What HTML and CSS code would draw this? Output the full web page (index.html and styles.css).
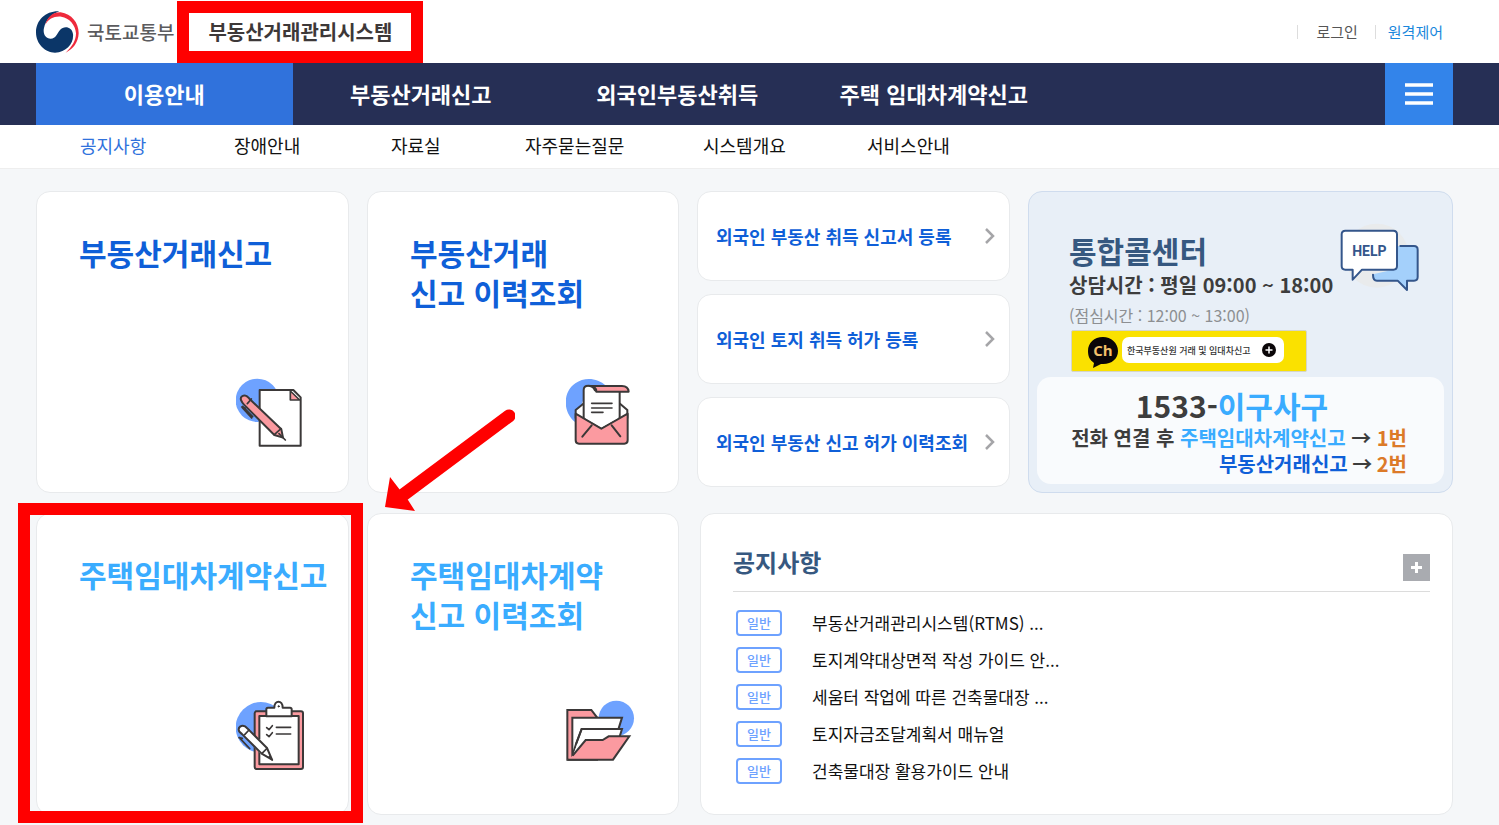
FILE: index.html
```html
<!DOCTYPE html>
<html lang="ko">
<head>
<meta charset="utf-8">
<meta name="viewport" content="width=device-width, initial-scale=1">
<title>부동산거래관리시스템</title>
<link rel="stylesheet" href="styles.css">
</head>
<body>
<header class="header">
  <div class="brand">
    <a class="ministry" href="#">
      <svg class="emblem" viewBox="108 31 129 126" aria-hidden="true">
        <path fill="#0b3668" d="M178 32C138 30 108 58 108 95c0 35 27 61 57 61 35-2 57-28 54-56-3-22-27-26-39-12-10 12-12 26-28 26s-24-16-20-32c6-26 23-42 46-50z"/>
        <path fill="#ee2a3c" d="M136 72c6-24 24-38 46-37 33 5 54 31 54 63-1 27-16 47-39 58 20-18 31-38 31-58-2-26-20-46-44-50-22-2-38 6-48 24z"/>
      </svg>
      <span>국토교통부</span>
    </a>
    <a class="system" href="#">부동산거래관리시스템</a>
  </div>
  <div class="account">
    <a class="login" href="#">로그인</a>
    <a class="remote" href="#">원격제어</a>
  </div>
</header>

<nav class="mainnav" aria-label="주 메뉴">
  <ul class="mainnav-list">
    <li class="current"><a href="#">이용안내</a></li>
    <li><a href="#">부동산거래신고</a></li>
    <li><a href="#">외국인부동산취득</a></li>
    <li><a href="#">주택 임대차계약신고</a></li>
  </ul>
  <button class="menu" type="button" aria-label="전체 메뉴">
    <svg viewBox="0 0 28 22" aria-hidden="true"><path stroke="#fff" stroke-width="3.4" d="M0 2h28M0 11h28M0 20h28"/></svg>
  </button>
</nav>

<nav class="subnav" aria-label="하위 메뉴">
  <a class="current" href="#">공지사항</a>
  <a href="#">장애안내</a>
  <a href="#">자료실</a>
  <a href="#">자주묻는질문</a>
  <a href="#">시스템개요</a>
  <a href="#">서비스안내</a>
</nav>

<main class="board">
  <a class="card tile" href="#">
    <span class="tile-title">부동산거래신고</span>
    <svg class="tile-icon" viewBox="45 39 210 216" aria-hidden="true">
      <circle cx="109" cy="106" r="65" fill="#6ea2ff"/>
      <g stroke="#3b3838" stroke-width="6" stroke-linejoin="round">
        <path fill="#fff" d="M116 75h101l22 22v145H116z"/>
        <path fill="#fb9aa0" d="M208 78v27h28z" stroke-width="5"/>
        <path fill="#fb9aa0" d="M61 107c-5-9 3-18 13-15 5 1 8 6 12 10l95 91 5 25-26-8-91-91c-4-4-6-7-8-12z"/>
        <path fill="none" stroke-linecap="round" d="M79 116l12-14M160 209l20-18M174 206l19 19M62 126l11 3M64 128l28 31M65 124l30 31" stroke-width="5"/>
      </g>
    </svg>
  </a>

  <a class="card tile" href="#">
    <span class="tile-title">부동산거래<br>신고 이력조회</span>
    <svg class="tile-icon" viewBox="48 39 210 216" aria-hidden="true">
      <path fill="#6ea2ff" d="M76 172C38 142 37 82 76 55c27-20 66-17 92 7l-60 20z"/>
      <g stroke="#3b3838" stroke-width="6" stroke-linejoin="round" stroke-linecap="round">
        <path fill="#fff" d="M100 116l-23 19v24l76 40 79-40v-24l-22-19z"/>
        <path fill="#fff" d="M101 164V75c0-17 27-17 33 0l6 3h69v92l-54 23z"/>
        <path fill="#fb9aa0" d="M118 63h98c13 0 19 6 20 17h-97c0-12-8-17-21-17z"/>
        <path fill="#fb9aa0" d="M77 146l77 45 79-45v80c0 7-3 10-10 10H87c-7 0-10-3-10-10z"/>
        <path fill="none" d="M125 181l-28 34M185 181l26 33"/>
        <path fill="#fff" stroke="none" d="M106 158l49 28 49-28V85h-98z"/>
        <path fill="none" d="M125 115h61M125 129h61M125 142h34" stroke-width="5"/>
      </g>
    </svg>
  </a>

  <div class="links">
    <a class="card link" href="#"><span>외국인 부동산 취득 신고서 등록</span><svg viewBox="0 0 10 16" aria-hidden="true"><path d="M1 1l7 7-7 7"/></svg></a>
    <a class="card link" href="#"><span>외국인 토지 취득 허가 등록</span><svg viewBox="0 0 10 16" aria-hidden="true"><path d="M1 1l7 7-7 7"/></svg></a>
    <a class="card link" href="#"><span>외국인 부동산 신고 허가 이력조회</span><svg viewBox="0 0 10 16" aria-hidden="true"><path d="M1 1l7 7-7 7"/></svg></a>
  </div>

  <section class="card call">
    <div class="call-head">
      <div class="call-text">
        <h2>통합콜센터</h2>
        <p class="hours">상담시간 : 평일 09:00 ~ 18:00</p>
        <p class="lunch">(점심시간 : 12:00 ~ 13:00)</p>
      </div>
      <svg class="help" viewBox="27 10 246 216" role="img" aria-label="HELP">
        <circle cx="140" cy="111" r="96" fill="#e9ebec"/>
        <g stroke="#34568b" stroke-width="6" stroke-linejoin="round" stroke-linecap="round">
          <path fill="#a4d0fb" stroke="none" d="M202 82h50c7 0 11 4 11 11v82c0 7-4 11-11 11h-21v28l-28-28h-62c-8 0-12-6-12-19l73-17z"/>
          <path fill="none" d="M211 82h41c7 0 11 4 11 11v82c0 7-4 11-11 11h-21v28l-28-28h-62c-8 0-12-6-12-18"/>
          <path fill="#fff" d="M46 36h144c7 0 11 4 11 11v95c0 7-4 11-11 11H96l-28 30v-30H46c-7 0-11-4-11-11V47c0-7 4-11 11-11z"/>
        </g>
        <text class="help-word" x="118" y="112" text-anchor="middle">HELP</text>
      </svg>
    </div>
    <a class="channel" href="#">
      <svg class="bubble" viewBox="0 0 30 31" aria-hidden="true">
        <path fill="#0a0608" d="M15 0C6 0 0 6 0 14c0 6 2 9 6 12l-1 5 8-4c10 1 17-5 17-13S23 0 15 0z"/>
        <text class="bubble-word" x="15" y="19" text-anchor="middle">Ch</text>
      </svg>
      <span class="pill">한국부동산원 거래 및 임대차신고
        <svg viewBox="0 0 14 14" aria-hidden="true"><circle cx="7" cy="7" r="7" fill="#0a0608"/><path stroke="#fff" stroke-width="1.5" d="M3.500 7h7M7 3.500v7"/></svg>
      </span>
    </a>
    <div class="phone">
      <p class="number">1533-<span class="sky">이구사구</span></p>
      <p class="route">전화 연결 후 <span class="sky">주택임대차계약신고</span> → <span class="key">1번</span></p>
      <p class="route"><span class="blue">부동산거래신고</span> → <span class="key">2번</span></p>
    </div>
  </section>

  <a class="card tile rent marked" href="#">
    <span class="tile-title">주택임대차계약신고</span>
    <svg class="tile-icon" viewBox="45 30 210 216" aria-hidden="true">
      <circle cx="120" cy="112" r="76" fill="#6ea2ff"/>
      <g stroke="#3b3838" stroke-width="6" stroke-linejoin="round" stroke-linecap="round">
        <rect x="101" y="64" width="145" height="173" rx="6" fill="#fb9aa0"/>
        <path fill="#fff" d="M115 78h118v145H115z"/>
        <path fill="#fff" d="M136 79V58c0-4 2-5 5-5h19c0-24 25-24 25 0h22c3 0 5 1 5 5v21z"/>
        <circle cx="173" cy="49" r="2" stroke-width="3"/>
        <path fill="none" d="M137 113l7 6 10-12M137 134l7 6 10-12M166 112h43M166 132h43" stroke-width="5"/>
        <path stroke="#fff" fill="none" stroke-width="32" d="M112 162l21 21"/>
        <path fill="#fff" d="M54 123c-4-11 7-19 18-14l13 12 53 53 15 35-31-18-58-58c-4-4-8-6-10-10z"/>
        <path fill="none" d="M71 134l13-14M123 190l15-15M145 200l9 10M55 143l31 33M54 143l10 2" stroke-width="5"/>
      </g>
    </svg>
  </a>

  <a class="card tile rent pointed" href="#">
    <span class="tile-title">주택임대차계약<br>신고 이력조회</span>
    <svg class="tile-icon" viewBox="48 30 210 216" aria-hidden="true">
      <circle cx="199" cy="85" r="53" fill="#6ea2ff"/>
      <g stroke="#3b3838" stroke-width="6" stroke-linejoin="miter">
        <path fill="#fb9aa0" d="M52 60h72l17 22v127H52z"/>
        <path fill="#fff" d="M67 83h149l-10 32-35 90H67z"/>
        <path fill="#fff" d="M78 162l17-45h121l-8 26-60 45H70z" stroke-linecap="round"/>
        <path fill="#fff" stroke="none" d="M71 190l28-68h45l-40 30-28 40z"/>
        <path fill="none" stroke-linecap="round" d="M79 160l16-43h40"/>
        <path fill="#fb9aa0" d="M68 197l39-47h51l18-11h62l-49 70H52"/>
      </g>
    </svg>
    <svg class="arrow" viewBox="0 0 132 104" aria-hidden="true">
      <path stroke="#f00" stroke-width="13" stroke-linecap="round" d="M126 7L20 86"/>
      <path fill="#f00" d="M2 98l5-30 10 13 8 10 7 11z"/>
    </svg>
  </a>

  <section class="card notice">
    <div class="notice-head">
      <h2>공지사항</h2>
      <button class="more" type="button" aria-label="공지사항 더보기">
        <svg viewBox="0 0 27 27" aria-hidden="true"><path stroke="#fff" stroke-width="3" d="M8 13.500h11M13.500 8v11"/></svg>
      </button>
    </div>
    <ul class="notice-list">
      <li><span class="badge">일반</span><a href="#">부동산거래관리시스템(RTMS) ...</a></li>
      <li><span class="badge">일반</span><a href="#">토지계약대상면적 작성 가이드 안...</a></li>
      <li><span class="badge">일반</span><a href="#">세움터 작업에 따른 건축물대장 ...</a></li>
      <li><span class="badge">일반</span><a href="#">토지자금조달계획서 매뉴얼</a></li>
      <li><span class="badge">일반</span><a href="#">건축물대장 활용가이드 안내</a></li>
    </ul>
  </section>
</main>
</body>
</html>
```
FILE: styles.css
```css
* { box-sizing: border-box; }
body {
  margin: 0;
  background: #f5f7f9;
  color: #111;
  font-family: "Noto Sans CJK KR", sans-serif;
  font-size: 18px;
}
a { color: inherit; text-decoration: none; }
ul, h2, p { margin: 0; padding: 0; list-style: none; }
button { border: 0; padding: 0; cursor: pointer; }
svg { display: block; flex: none; }

/* header */
.header {
  display: flex;
  justify-content: space-between;
  align-items: center;
  height: 63px;
  padding: 0 56px 0 36px;
  background: #fff;
}
.brand, .ministry, .account { display: flex; align-items: center; }
.brand { gap: 3px; }
.ministry { gap: 8px; color: #5b5b5e; font-size: 19px; font-weight: 500; }
.emblem { width: 43px; height: 42px; }
.system {
  padding: 4px 19px;
  margin-top: 1px;
  border: 12px solid #f00;
  color: #3d3838;
  font-size: 20px;
  font-weight: 700;
  line-height: 30px;
}
.account { gap: 17px; font-size: 15px; line-height: 14px; }
.account a { border-left: 1px solid #ddd; }
.login { padding-left: 18px; color: #555; }
.remote { padding-left: 12px; color: #1a87dc; }

/* main navigation */
.mainnav {
  display: flex;
  justify-content: space-between;
  height: 62px;
  padding: 0 46px 0 36px;
  background: #262f55;
}
.mainnav-list { display: flex; flex: 0 1 1026px; }
.mainnav-list li { flex: 1; }
.mainnav-list a {
  display: flex;
  align-items: center;
  justify-content: center;
  height: 100%;
  padding-bottom: 2px;
  color: #fff;
  font-size: 22px;
  font-weight: 700;
  white-space: nowrap;
}
.mainnav-list .current { background: #3072dc; }
.menu {
  display: flex;
  align-items: center;
  justify-content: center;
  width: 68px;
  background: #3384ea;
}
.menu svg { width: 28px; height: 22px; }

/* sub navigation */
.subnav {
  display: grid;
  grid-template-columns: 154px 157px 134px 178px 164px auto;
  padding: 0 46px 2px 80px;
  border-bottom: 1px solid #eee;
  background: #fff;
  line-height: 41px;
  white-space: nowrap;
}
.subnav .current { color: #3072dc; }

/* board */
.board {
  display: grid;
  grid-template-columns: 313fr 312fr 313fr 425fr;
  grid-auto-rows: minmax(302px, auto);
  gap: 20px 18px;
  padding: 22px 46px 10px 36px;
}
.card {
  border: 1px solid #e8eaec;
  border-radius: 14px;
  background: #fff;
}
.tile {
  position: relative;
  display: flex;
  flex-direction: column;
  justify-content: space-between;
  padding: 40px 0 42px 42px;
  color: #0f5fd8;
}
.rent, .sky { color: #3aacff; }
.tile-title { font-size: 30px; font-weight: 700; line-height: 40px; white-space: nowrap; }
.tile-icon { align-self: flex-end; width: 70px; height: 72px; margin-right: 42px; }
.marked::after {
  content: "";
  position: absolute;
  inset: -11px -15px -9px -19px;
  border: 12px solid #f00;
}
.arrow {
  position: absolute;
  top: -105px;
  left: 15px;
  width: 132px;
  height: 104px;
}

.links { display: flex; flex-direction: column; gap: 13px; }
.link {
  display: flex;
  align-items: center;
  justify-content: space-between;
  height: 90px;
  padding: 0 14px 0 18px;
  color: #0f5fd8;
  font-size: 18px;
  font-weight: 700;
  white-space: nowrap;
}
.link svg { width: 10px; height: 16px; fill: none; stroke: #a5a5a8; stroke-width: 2.5; }

/* call centre */
.call { padding: 30px 8px 8px; border-color: #cfdcee; background: #e8eff7; color: #3d3d3d; }
.call-head {
  display: flex;
  justify-content: space-between;
  padding: 0 23px 0 32px;
  white-space: nowrap;
}
.call-text { padding-top: 8px; }
.call h2, .notice h2 { color: #365880; font-weight: 700; }
.call h2 { font-size: 30px; line-height: 40px; }
.hours { font-size: 20px; font-weight: 700; line-height: 30px; }
.lunch { color: #8d8f92; font-size: 16px; line-height: 30px; }
.help { width: 82px; height: 72px; }
.help-word { fill: #34568b; font: 700 42px Roboto, sans-serif; }
.channel {
  display: flex;
  gap: 4px;
  width: 236px;
  height: 42px;
  margin-left: 34px;
  padding: 6px 16px;
  border: 1px solid #d5d5c8;
  border-radius: 2px;
  background: #fae100;
}
.bubble { width: 30px; height: 31px; }
.bubble-word { fill: #f3c06a; font: 700 15px "Open Sans", sans-serif; }
.pill {
  display: flex;
  align-items: center;
  justify-content: space-between;
  width: 162px;
  height: 26px;
  padding: 0 8px 0 5px;
  border-radius: 7px;
  background: #fff;
  color: #333;
  font-size: 9px;
  font-weight: 500;
  white-space: nowrap;
}
.pill svg { width: 14px; height: 14px; }
.phone {
  margin-top: 5px;
  padding: 9px 37px 7px 20px;
  border-radius: 14px;
  background: #f9fbfd;
  font-weight: 700;
  white-space: nowrap;
}
.number { font-size: 30px; line-height: 39px; text-align: center; }
.route { font-size: 20px; line-height: 26px; text-align: right; }
.route span { display: inline-block; }
.blue { color: #0f5fd8; }
.key { color: #dc7a28; }

/* notices */
.notice { grid-column: span 2; margin-left: 3px; padding: 28px 22px 0 32px; }
.notice-head {
  display: flex;
  align-items: center;
  justify-content: space-between;
  padding-bottom: 9px;
  border-bottom: 1px solid #dcdcdc;
}
.notice h2 { font-size: 24px; line-height: 40px; }
.more { width: 27px; height: 27px; margin-top: 10px; background: #a9abb0; }
.notice-list { padding: 12px 3px; }
.notice-list li { display: flex; align-items: center; gap: 30px; height: 37px; font-size: 17px; }
.badge {
  width: 46px;
  border: 2px solid #6ea2ff;
  border-radius: 4px;
  color: #6ea2ff;
  font-size: 13px;
  font-weight: 500;
  line-height: 22px;
  text-align: center;
}
```
